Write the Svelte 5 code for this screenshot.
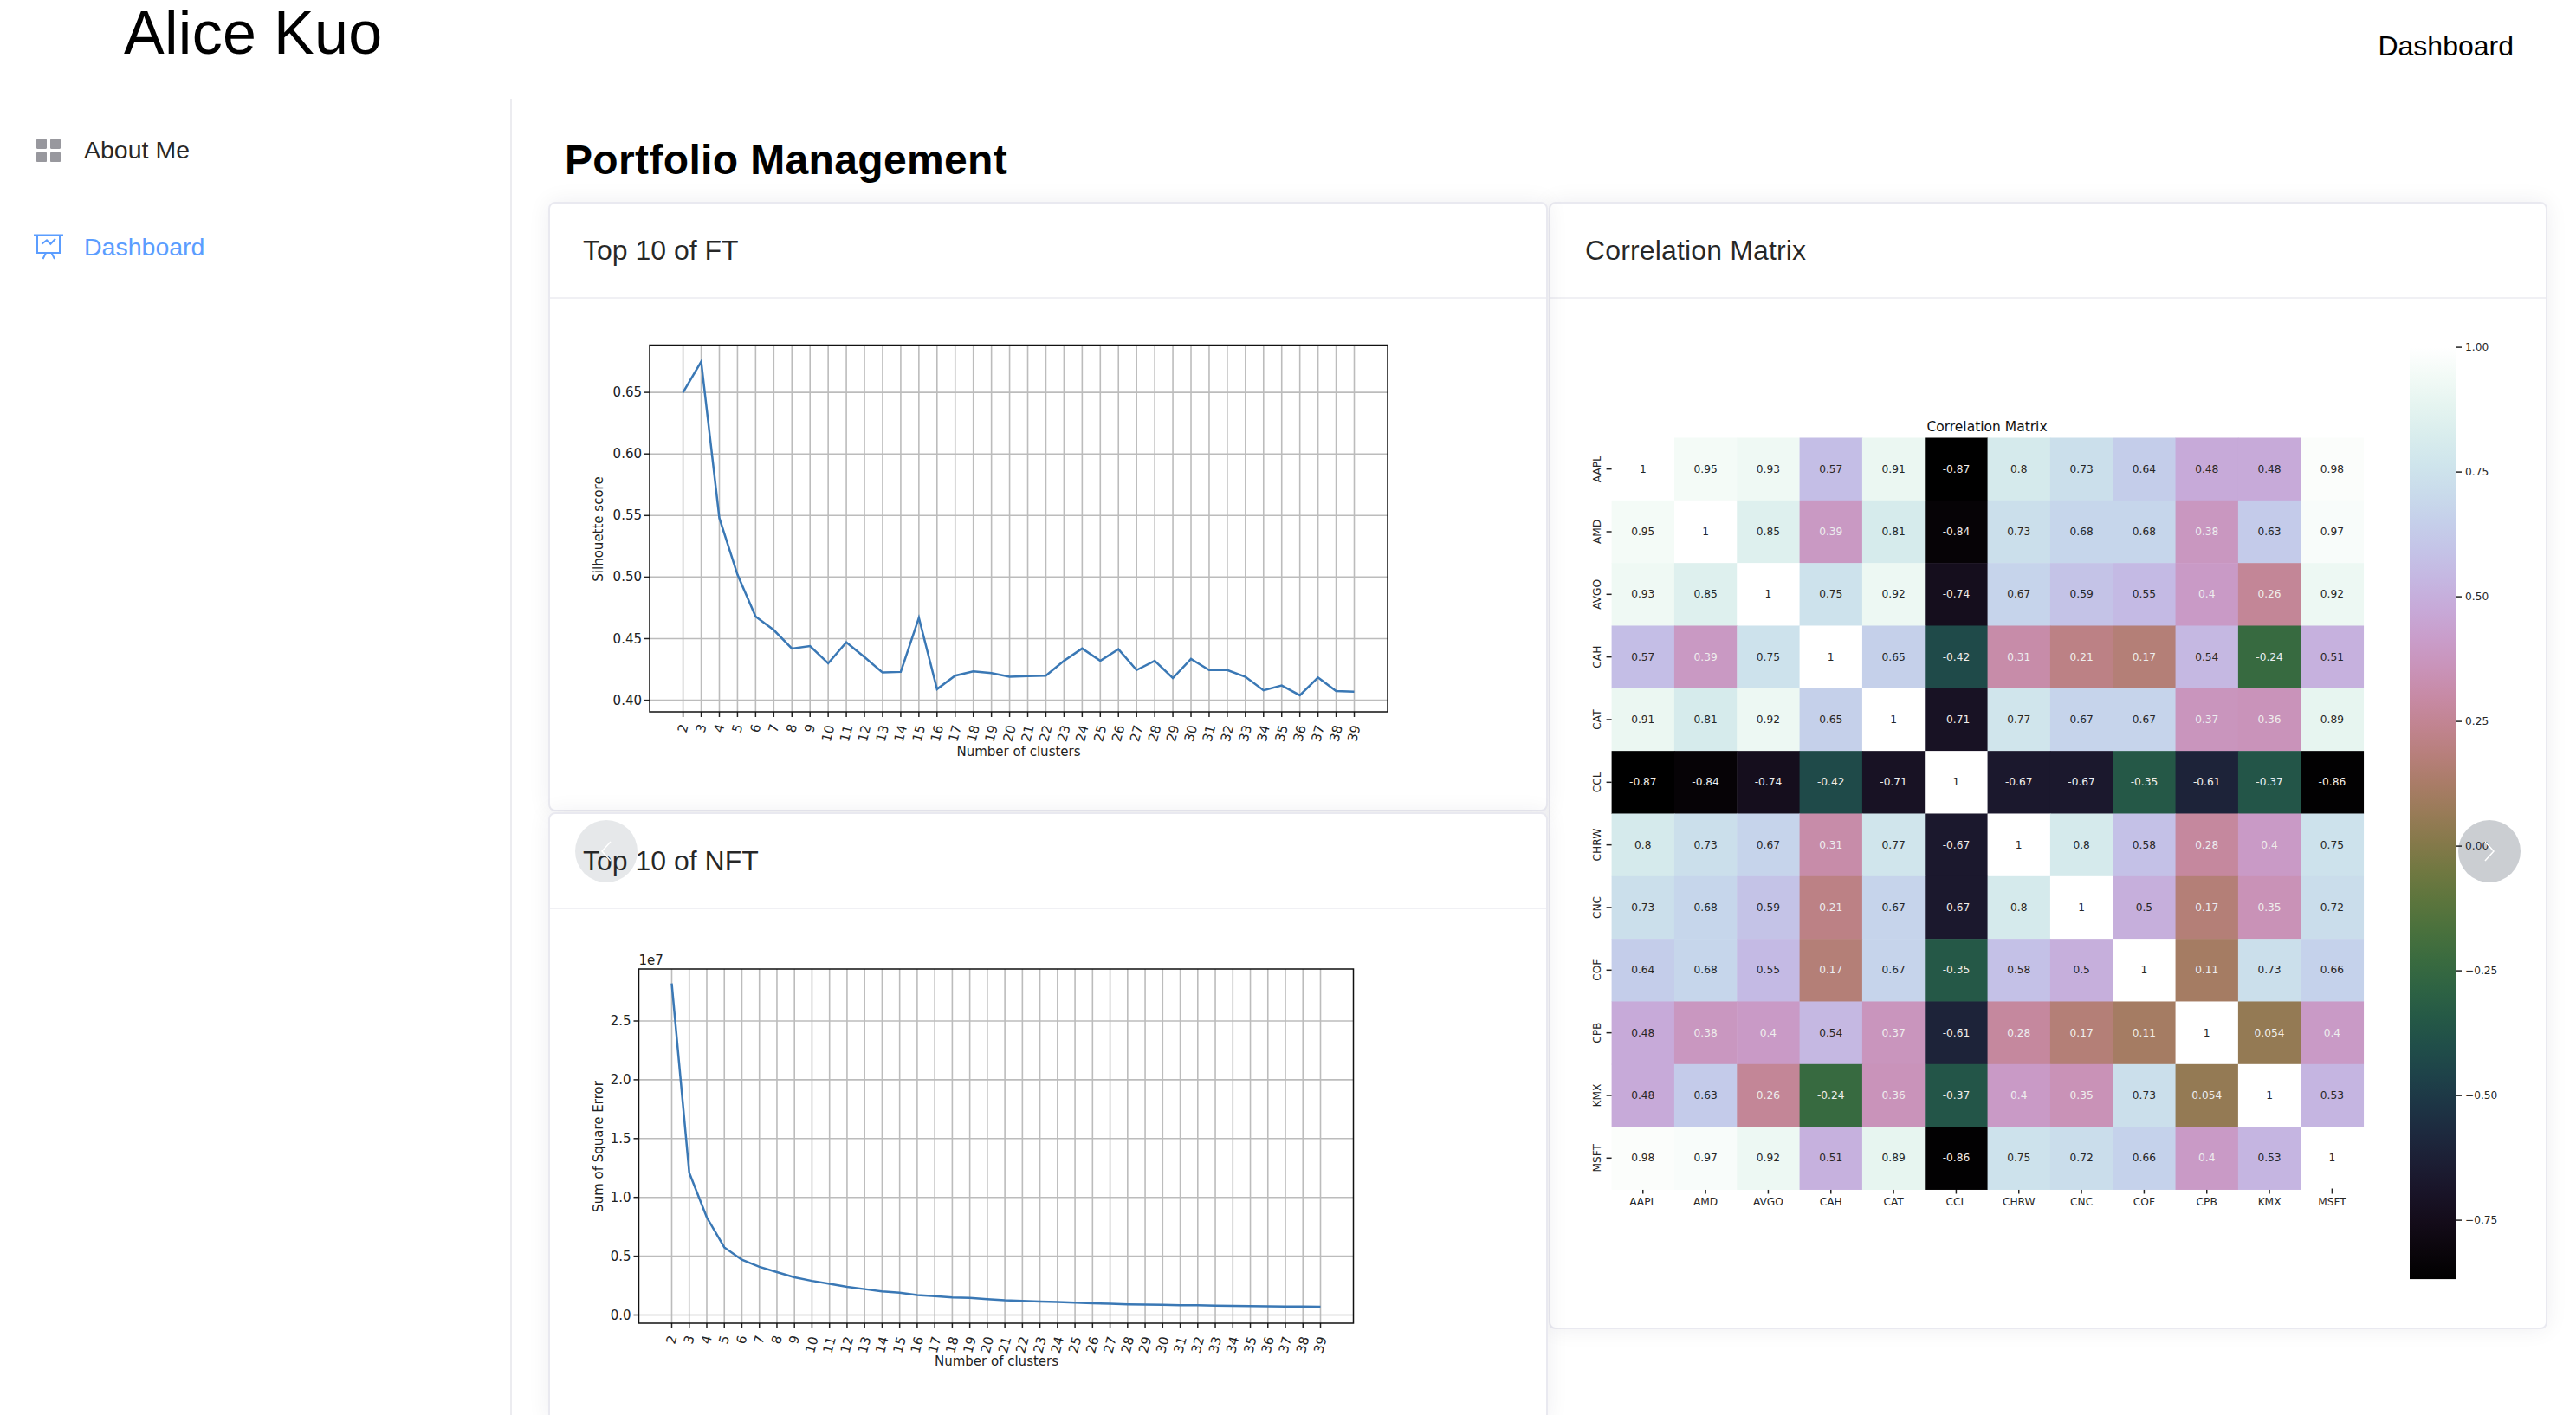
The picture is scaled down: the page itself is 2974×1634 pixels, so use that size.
<script>
  const labels = ['AAPL', 'AMD', 'AVGO', 'CAH', 'CAT', 'CCL', 'CHRW', 'CNC', 'COF', 'CPB', 'KMX', 'MSFT']
  const matrix = [
    [1, 0.95, 0.93, 0.57, 0.91, -0.87, 0.8, 0.73, 0.64, 0.48, 0.48, 0.98],
    [0.95, 1, 0.85, 0.39, 0.81, -0.84, 0.73, 0.68, 0.68, 0.38, 0.63, 0.97],
    [0.93, 0.85, 1, 0.75, 0.92, -0.74, 0.67, 0.59, 0.55, 0.4, 0.26, 0.92],
    [0.57, 0.39, 0.75, 1, 0.65, -0.42, 0.31, 0.21, 0.17, 0.54, -0.24, 0.51],
    [0.91, 0.81, 0.92, 0.65, 1, -0.71, 0.77, 0.67, 0.67, 0.37, 0.36, 0.89],
    [-0.87, -0.84, -0.74, -0.42, -0.71, 1, -0.67, -0.67, -0.35, -0.61, -0.37, -0.86],
    [0.8, 0.73, 0.67, 0.31, 0.77, -0.67, 1, 0.8, 0.58, 0.28, 0.4, 0.75],
    [0.73, 0.68, 0.59, 0.21, 0.67, -0.67, 0.8, 1, 0.5, 0.17, 0.35, 0.72],
    [0.64, 0.68, 0.55, 0.17, 0.67, -0.35, 0.58, 0.5, 1, 0.11, 0.73, 0.66],
    [0.48, 0.38, 0.4, 0.54, 0.37, -0.61, 0.28, 0.17, 0.11, 1, 0.054, 0.4],
    [0.48, 0.63, 0.26, -0.24, 0.36, -0.37, 0.4, 0.35, 0.73, 0.054, 1, 0.53],
    [0.98, 0.97, 0.92, 0.51, 0.89, -0.86, 0.75, 0.72, 0.66, 0.4, 0.53, 1],
  ]

  const ftScores = [0.65, 0.675, 0.548, 0.502, 0.468, 0.457, 0.442, 0.444, 0.43, 0.447, 0.435, 0.4225, 0.423, 0.467, 0.409, 0.42, 0.4235, 0.422, 0.419, 0.4195, 0.42, 0.432, 0.442, 0.432, 0.4415, 0.4245, 0.432, 0.418, 0.4335, 0.4245, 0.4245, 0.419, 0.408, 0.412, 0.404, 0.4185, 0.4075, 0.407]
  const nftErrors = [2.82, 1.21, 0.83, 0.575, 0.47, 0.41, 0.365, 0.32, 0.29, 0.265, 0.24, 0.22, 0.2, 0.19, 0.17, 0.16, 0.15, 0.145, 0.135, 0.125, 0.12, 0.115, 0.11, 0.105, 0.1, 0.095, 0.09, 0.088, 0.086, 0.083, 0.082, 0.08, 0.078, 0.075, 0.074, 0.072, 0.071, 0.07]

  // plot boxes in svg coordinates, x0/x1 are the centres of the first and last cluster tick
  const ftChart = {
    box: { l: 67, r: 919, t: 3.5, b: 427 },
    x0: 105.6, x1: 880.5,
    yAt: (v) => 413.6 - (v - 0.4) * 1422,
    yTicks: [0.4, 0.45, 0.5, 0.55, 0.6, 0.65],
    fmt: (v) => v.toFixed(2),
    data: ftScores,
    xLabel: { x: 493, y: 473 },
    yLabel: { x: 8, y: 216, text: 'Silhouette score' },
  }
  const nftChart = {
    box: { l: 54.5, r: 879.5, t: 19, b: 428 },
    x0: 92.5, x1: 841.5,
    yAt: (v) => 418.5 - v * 135.8,
    yTicks: [0, 0.5, 1, 1.5, 2, 2.5],
    fmt: (v) => v.toFixed(1),
    data: nftErrors,
    xLabel: { x: 467.5, y: 472 },
    yLabel: { x: 8, y: 224, text: 'Sum of Square Error' },
    offset: '1e7',
  }
  const charts = [
    { title: 'Top 10 of FT', ...ftChart },
    { title: 'Top 10 of NFT', ...nftChart },
  ]

  const clusterX = (c, i) => c.x0 + (i * (c.x1 - c.x0)) / 37
  const linePoints = (c) => c.data.map((v, i) => `${clusterX(c, i)},${c.yAt(v)}`).join(' ')

  // cubehelix palette of the heatmap, hue turned down a bit to match the screenshot
  function cubehelix(t) {
    const a = 0.75 * 0.5 * t * (1 - t)
    const angle = 2 * Math.PI * (0.5 / 3 + 1 - 1.5 * t)
    const cos = Math.cos(angle)
    const sin = Math.sin(angle)
    const ch = (p, q) => Math.round(255 * Math.min(1, Math.max(0, t + a * (p * cos + q * sin))))
    return `rgb(${ch(-0.14861, 1.78277)},${ch(-0.29227, -0.90649)},${ch(1.97294, 0)})`
  }
  const vmin = -0.87
  const cellColor = (v) => cubehelix((v - vmin) / (1 - vmin))

  const cell = 72.33
  const heat = { l: 22.6, t: 110.5 }
  const barStops = Array.from({ length: 33 }, (_, i) => i / 32)
  const barTicks = [1, 0.75, 0.5, 0.25, 0, -0.25, -0.5, -0.75]
  const barY = (v) => 6.1 + (1 - v) * 576
</script>

<div class="page">
  <header class="topbar">
    <h1 class="brand">Alice Kuo</h1>
    <a class="top-link" href="#dashboard">Dashboard</a>
  </header>

  <div class="body">
    <aside class="sidebar">
      <a class="side-item" href="#about">
        <svg class="side-icon" viewBox="0 0 28 27" width="28" height="27">
          <rect x="0" y="0" width="12" height="12" rx="1.500" />
          <rect x="16" y="0" width="12" height="12" rx="1.500" />
          <rect x="0" y="15.300" width="12" height="12" rx="1.500" />
          <rect x="16" y="15.300" width="12" height="12" rx="1.500" />
        </svg>
        <span>About Me</span>
      </a>
      <a class="side-item active" href="#dashboard">
        <svg class="side-icon screen" viewBox="0 0 34 30" width="34" height="30">
          <path d="M0 1.500h34M4 1.500V22h26V1.500M14 22l-3.500 7M20.500 22l3.500 7" />
          <path d="M9.300 11.700L15 7.300l4.300 4.400L25 5.700" />
        </svg>
        <span>Dashboard</span>
      </a>
    </aside>

    <main class="main">
      <h2 class="heading">Portfolio Management</h2>
      <div class="board">
        <div class="stack">
          {#each charts as c}
            <section class="card">
              <div class="card-head">{c.title}</div>
              <div class="card-body">
                <svg class="plot" viewBox="0 0 1056 493" width="1056" height="493">
                  {#each c.data as _, i}
                    <line class="grid" x1={clusterX(c, i)} x2={clusterX(c, i)} y1={c.box.t} y2={c.box.b} />
                    <line class="tick" x1={clusterX(c, i)} x2={clusterX(c, i)} y1={c.box.b} y2={c.box.b + 6} />
                    <text
                      class="tlabel"
                      text-anchor="middle"
                      dominant-baseline="central"
                      transform="translate({clusterX(c, i)} {c.box.b + (i < 8 ? 19 : 25)}) rotate(-75)"
                    >{i + 2}</text>
                  {/each}
                  {#each c.yTicks as v}
                    <line class="grid" x1={c.box.l} x2={c.box.r} y1={c.yAt(v)} y2={c.yAt(v)} />
                    <line class="tick" x1={c.box.l - 6} x2={c.box.l} y1={c.yAt(v)} y2={c.yAt(v)} />
                    <text class="tlabel" x={c.box.l - 9} y={c.yAt(v)} text-anchor="end" dominant-baseline="central">{c.fmt(v)}</text>
                  {/each}
                  <polyline class="curve" points={linePoints(c)} />
                  <rect class="frame" x={c.box.l} y={c.box.t} width={c.box.r - c.box.l} height={c.box.b - c.box.t} />
                  {#if c.offset}
                    <text class="tlabel" x={c.box.l} y={c.box.t - 5}>{c.offset}</text>
                  {/if}
                  <text class="tlabel" x={c.xLabel.x} y={c.xLabel.y} text-anchor="middle" dominant-baseline="central">Number of clusters</text>
                  <text
                    class="tlabel"
                    text-anchor="middle"
                    dominant-baseline="central"
                    transform="translate({c.yLabel.x} {c.yLabel.y}) rotate(-90)"
                  >{c.yLabel.text}</text>
                </svg>
              </div>
            </section>
          {/each}
        </div>

        <section class="card matrix-card">
          <div class="card-head">Correlation Matrix</div>
          <div class="card-body">
            <svg class="plot" viewBox="0 0 1056 1093" width="1056" height="1093">
              <defs>
                <linearGradient id="bar" x1="0" y1="1" x2="0" y2="0">
                  {#each barStops as s}
                    <stop offset={s} stop-color={cubehelix(s)} />
                  {/each}
                </linearGradient>
              </defs>
              <text class="hm-title" x="456" y="97.500" text-anchor="middle" dominant-baseline="central">Correlation Matrix</text>
              {#each matrix as row, r}
                {#each row as v, c}
                  <rect x={heat.l + c * cell} y={heat.t + r * cell} width={cell + 0.5} height={cell + 0.5} fill={cellColor(v)} />
                  <text
                    class="annot"
                    class:light={v < 0.45}
                    x={heat.l + (c + 0.5) * cell}
                    y={heat.t + (r + 0.5) * cell}
                    text-anchor="middle"
                    dominant-baseline="central"
                  >{v}</text>
                {/each}
                <line class="tick" x1={heat.l - 6} x2={heat.l} y1={heat.t + (r + 0.5) * cell} y2={heat.t + (r + 0.5) * cell} />
                <text
                  class="annot"
                  text-anchor="middle"
                  dominant-baseline="central"
                  transform="translate(6 {heat.t + (r + 0.5) * cell}) rotate(-90)"
                >{labels[r]}</text>
                <line class="tick" x1={heat.l + (r + 0.5) * cell} x2={heat.l + (r + 0.5) * cell} y1={heat.t + 867} y2={heat.t + 873} />
                <text class="annot" x={heat.l + (r + 0.5) * cell} y={992.5} text-anchor="middle" dominant-baseline="central">{labels[r]}</text>
              {/each}
              <rect x="944" y="6.100" width="54" height="1076" fill="url(#bar)" />
              {#each barTicks as v}
                <line class="tick" x1="998" x2="1004" y1={barY(v)} y2={barY(v)} />
                <text class="annot" x="1008" y={barY(v)} dominant-baseline="central">{v < 0 ? '−' + Math.abs(v).toFixed(2) : v.toFixed(2)}</text>
              {/each}
            </svg>
          </div>
        </section>

        <button class="arrow prev" aria-label="Previous">
          <svg viewBox="0 0 12 24" width="12" height="24"><path d="M11 1L1 12l10 11" /></svg>
        </button>
        <button class="arrow next" aria-label="Next">
          <svg viewBox="0 0 12 24" width="12" height="24"><path d="M1 1l10 11L1 23" /></svg>
        </button>
      </div>
    </main>
  </div>
</div>

<style>
  :global(body) {
    margin: 0;
    background: #fff;
  }

  .page {
    width: 2974px;
    height: 1634px;
    overflow: hidden;
    font-family: 'Liberation Sans', Arial, sans-serif;
    color: rgba(0, 0, 0, 0.85);
  }

  .topbar {
    height: 114px;
    display: flex;
    justify-content: space-between;
    align-items: flex-start;
    padding: 0 72px 0 143px;
    box-sizing: border-box;
  }

  .brand {
    margin: 0;
    font-size: 70px;
    font-weight: 400;
    line-height: 76px;
    letter-spacing: 0.3px;
    color: #000;
  }

  .top-link {
    margin-top: 35px;
    font-size: 32px;
    line-height: 36px;
    color: #000;
    text-decoration: none;
  }

  .body {
    display: flex;
  }

  .sidebar {
    width: 591px;
    height: 1520px;
    box-sizing: border-box;
    border-right: 2px solid #ececf0;
    padding-top: 44px;
    display: flex;
    flex-direction: column;
    gap: 82px;
  }

  .side-item {
    height: 30px;
    display: flex;
    align-items: center;
    padding-left: 42px;
    font-size: 28.500px;
    color: rgba(0, 0, 0, 0.85);
    text-decoration: none;
  }

  .side-item span {
    margin-left: 27px;
  }

  .side-icon {
    fill: #98989e;
  }

  .side-icon.screen {
    margin-left: -3px;
    margin-right: -2px;
    fill: none;
    stroke: #5b9dff;
    stroke-width: 2;
  }

  .side-item.active {
    color: #5b9dff;
  }

  .side-item.active span {
    margin-left: 26px;
  }

  .main {
    width: 2383px;
    padding-left: 42px;
    box-sizing: border-box;
  }

  .heading {
    margin: 42px 0 0 19px;
    font-size: 48px;
    line-height: 58px;
    font-weight: 700;
    letter-spacing: 0.35px;
    color: #000;
  }

  .board {
    position: relative;
    margin-top: 19px;
    display: flex;
    gap: 1px;
    align-items: flex-start;
    width: 2308px;
  }

  .stack {
    position: relative;
    z-index: 1;
    display: flex;
    flex-direction: column;
    gap: 1px;
    width: 1154px;
  }

  .card {
    background: #fff;
    border: 2px solid #e9e9f0;
    border-radius: 8px;
    box-shadow: 0 0 26px rgba(30, 30, 60, 0.07);
    box-sizing: border-box;
  }

  .matrix-card {
    width: 1153px;
  }

  .card-head {
    height: 110px;
    box-sizing: border-box;
    padding: 0 38px;
    display: flex;
    align-items: center;
    font-size: 32px;
    border-bottom: 2px solid #f0f0f4;
  }

  .matrix-card .card-head {
    padding-left: 40px;
    letter-spacing: 0.15px;
  }

  .card-body {
    padding: 50px 48px 47px 48px;
  }

  .matrix-card .card-body {
    padding-bottom: 45px;
  }

  .plot {
    display: block;
    overflow: visible;
  }

  .grid {
    stroke: #bcbcbc;
    stroke-width: 1.6;
  }

  .tick {
    stroke: #222;
    stroke-width: 1.5;
  }

  .frame {
    fill: none;
    stroke: #111;
    stroke-width: 1.5;
  }

  .curve {
    fill: none;
    stroke: #3a78b5;
    stroke-width: 2.500;
  }

  .tlabel {
    font-family: 'DejaVu Sans', sans-serif;
    font-size: 15px;
    fill: #222;
  }

  .hm-title {
    font-family: 'DejaVu Sans', sans-serif;
    font-size: 15.500px;
    fill: #111;
  }

  .annot {
    font-family: 'DejaVu Sans', sans-serif;
    font-size: 12.200px;
    fill: #262626;
  }

  .annot.light {
    fill: #eee;
  }

  .arrow {
    position: absolute;
    z-index: 2;
    top: 714px;
    width: 72px;
    height: 72px;
    padding: 0;
    border: none;
    border-radius: 50%;
    display: flex;
    align-items: center;
    justify-content: center;
  }

  .arrow path {
    fill: none;
    stroke: #fff;
    stroke-width: 1.500;
  }

  .prev {
    left: 31px;
    background: rgba(31, 45, 61, 0.11);
  }

  .next {
    left: 2205px;
    background: rgba(31, 45, 61, 0.23);
  }
</style>
